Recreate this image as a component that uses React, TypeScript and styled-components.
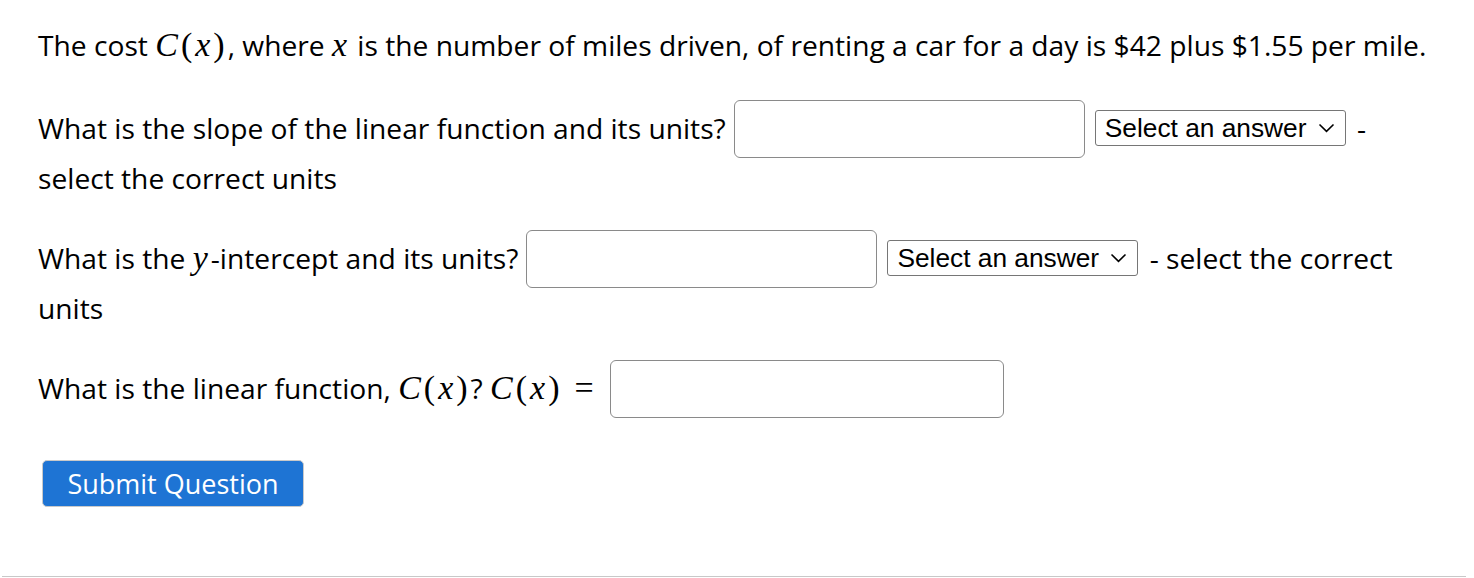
import React from "react";
import styled, { createGlobalStyle } from "styled-components";

const Global = createGlobalStyle`
  html, body { margin: 0; padding: 0; background: #fff; }
  body { font-family: "Open Sans", "Noto Sans", sans-serif; color: #000; }
`;

const Page = styled.div`
  margin: 0 8px 0 2px;
  padding: 20px 24px 0 36px;
  height: 556px;
  border-bottom: 1px solid #c8c8c8;
  font-size: 28.2px;
  line-height: 50px;
`;

const Para = styled.p<{ $gap?: number }>`
  margin: 0 0 ${(p) => (p.$gap ?? 30)}px;
`;

const Math = styled.span<{ $spaced?: boolean }>`
  font-family: "Liberation Serif", "DejaVu Serif", serif;
  font-size: 34px;
  line-height: 1;
  letter-spacing: ${(p) => (p.$spaced ? "3px" : "0")};
  white-space: nowrap;
`;

const Var = styled.i`
  font-style: italic;
`;

const Eq = styled.span`
  margin: 0 8px 0 12px;
`;

const Field = styled.input<{ $w: number }>`
  box-sizing: border-box;
  width: ${(p) => p.$w}px;
  height: 58px;
  margin: -10px 6px -6px 8px;
  vertical-align: middle;
  border: 1.5px solid #8a8a8a;
  border-radius: 6px;
  background: #fff;
  font-size: 24px;
  padding: 0 8px;
`;

const SelectWrap = styled.span`
  position: relative;
  display: inline-block;
  vertical-align: middle;
  margin: -7px 4px -1px 4px;
  line-height: 0;
`;

const Select = styled.select`
  appearance: none;
  box-sizing: border-box;
  width: 251px;
  height: 36px;
  border: 1px solid #767676;
  border-radius: 3px;
  background: #fff;
  color: #000;
  font-family: "Liberation Sans", Arial, sans-serif;
  font-size: 26.3px;
  padding: 0 30px 0 9px;
  margin: 0;
`;

const Chevron = styled.svg`
  position: absolute;
  right: 11px;
  top: 13px;
  width: 17px;
  height: 10px;
  pointer-events: none;
`;

const Submit = styled.button`
  margin: 17px 0 0 4px;
  box-sizing: border-box;
  width: 262px;
  height: 47px;
  background: #1e74d4;
  color: #fff;
  border: 1.5px solid #c9c9c9;
  border-radius: 5px;
  font-family: "Open Sans", "Noto Sans", sans-serif;
  font-size: 27px;
  padding: 0;
  cursor: pointer;
`;

const Cx = () => (
  <Math $spaced>
    <Var>C</Var>(<Var>x</Var>)
  </Math>
);

const AnswerSelect = () => (
  <SelectWrap>
    <Select defaultValue="">
      <option value="">Select an answer</option>
      <option>dollars per mile</option>
      <option>miles per dollar</option>
      <option>dollars</option>
      <option>miles</option>
    </Select>
    <Chevron viewBox="0 0 17 10">
      <path d="M1.5 1.5 L8.5 8.3 L15.5 1.5" fill="none" stroke="#000" strokeWidth="1.6" />
    </Chevron>
  </SelectWrap>
);

export default function App() {
  return (
    <>
      <Global />
      <Page>
        <Para $gap={33}>
          The cost <Cx />, where <Math $spaced><Var>x</Var></Math> is the number of miles driven, of
          renting a car for a day is $42 plus $1.55 per mile.
        </Para>
        <Para>
          What is the slope of the linear function and its units?
          <Field $w={351} aria-label="slope" />
          <AnswerSelect /> - select the correct units
        </Para>
        <Para>
          What is the <Math $spaced><Var>y</Var></Math>-intercept and its units?
          <Field $w={351} aria-label="y-intercept" />
          <AnswerSelect /> - select the correct units
        </Para>
        <Para>
          What is the linear function, <Cx />? <Cx />
          <Math><Eq>=</Eq></Math>
          <Field $w={394} aria-label="function" />
        </Para>
        <Submit>Submit Question</Submit>
      </Page>
    </>
  );
}
